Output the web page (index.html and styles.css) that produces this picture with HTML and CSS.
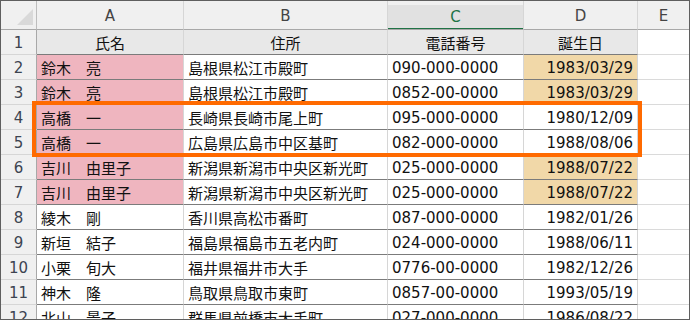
FILE: index.html
```html
<!DOCTYPE html>
<html lang="ja">
<head>
<meta charset="utf-8">
<title>Sheet</title>
<link rel="stylesheet" href="styles.css">
</head>
<body>
<div class="frame">
  <div class="sheet">
    <div class="corner"><svg class="tri" width="16" height="16" viewBox="0 0 16 16"><polygon points="16,0 16,16 0,16" fill="#d9d9d9"/></svg></div>
    <div class="ch">A</div><div class="ch">B</div><div class="ch sel"><span class="selbg">C</span></div><div class="ch">D</div><div class="ch last">E</div>

    <div class="rh">1</div><div class="c hd">氏名</div><div class="c hd">住所</div><div class="c hd">電話番号</div><div class="c hd">誕生日</div><div class="e"></div>

    <div class="rh">2</div><div class="c pk">鈴木　亮</div><div class="c">島根県松江市殿町</div><div class="c">090-000-0000</div><div class="c tn r">1983/03/29</div><div class="e"></div>
    <div class="rh">3</div><div class="c pk">鈴木　亮</div><div class="c">島根県松江市殿町</div><div class="c">0852-00-0000</div><div class="c tn r">1983/03/29</div><div class="e"></div>
    <div class="rh">4</div><div class="c pk">高橋　一</div><div class="c">長崎県長崎市尾上町</div><div class="c">095-000-0000</div><div class="c r">1980/12/09</div><div class="e"></div>
    <div class="rh">5</div><div class="c pk">高橋　一</div><div class="c">広島県広島市中区基町</div><div class="c">082-000-0000</div><div class="c r">1988/08/06</div><div class="e"></div>
    <div class="rh">6</div><div class="c pk">吉川　由里子</div><div class="c">新潟県新潟市中央区新光町</div><div class="c">025-000-0000</div><div class="c tn r">1988/07/22</div><div class="e"></div>
    <div class="rh">7</div><div class="c pk">吉川　由里子</div><div class="c">新潟県新潟市中央区新光町</div><div class="c">025-000-0000</div><div class="c tn r">1988/07/22</div><div class="e"></div>
    <div class="rh">8</div><div class="c">綾木　剛</div><div class="c">香川県高松市番町</div><div class="c">087-000-0000</div><div class="c r">1982/01/26</div><div class="e"></div>
    <div class="rh">9</div><div class="c">新垣　結子</div><div class="c">福島県福島市五老内町</div><div class="c">024-000-0000</div><div class="c r">1988/06/11</div><div class="e"></div>
    <div class="rh">10</div><div class="c">小栗　旬大</div><div class="c">福井県福井市大手</div><div class="c">0776-00-0000</div><div class="c r">1982/12/26</div><div class="e"></div>
    <div class="rh">11</div><div class="c">神木　隆</div><div class="c">鳥取県鳥取市東町</div><div class="c">0857-00-0000</div><div class="c r">1993/05/19</div><div class="e"></div>
    <div class="rh">12</div><div class="c">北山　景子</div><div class="c">群馬県前橋市大手町</div><div class="c">027-000-0000</div><div class="c r">1986/08/22</div><div class="e"></div>
  </div>
  <div class="mark"></div>
</div>
</body>
</html>
```
FILE: styles.css
```css
* { box-sizing: border-box; }
html, body { margin: 0; padding: 0; background: #fff; }
.frame {
  position: relative;
  width: 690px;
  height: 320px;
  border: 1px solid #5f5f5f;
  overflow: hidden;
  font-family: "DejaVu Sans", "Noto Sans CJK JP", sans-serif;
  font-size: 15px;
  color: #111;
}
.sheet {
  display: grid;
  grid-template-columns: 36px 147px 204px 136px 114px 51px;
  grid-template-rows: 29px repeat(11, 25px) 25px;
}
.sheet > div {
  display: flex;
  align-items: center;
  white-space: nowrap;
  overflow: hidden;
}
.corner {
  background: #f0f0f0;
  border-right: 1px solid #bdbdbd;
  border-bottom: 1px solid #a8a8a8;
  justify-content: flex-end;
  align-items: flex-end !important;
  padding: 0 3px 4px 0;
}
.tri { display: block; }
.ch {
  background: #f0f0f0;
  border-right: 1px solid #d6d6d6;
  border-bottom: 1px solid #a8a8a8;
  justify-content: center;
  color: #444;
  padding-top: 2px;
}
.ch.last { border-right: none; }
.ch.sel {
  padding: 4px 0 0 0;
  align-items: stretch !important;
}
.selbg {
  flex: 1;
  display: flex;
  align-items: center;
  justify-content: center;
  background: #e1e1e1;
  border-bottom: 2px solid #217346;
  color: #217346;
  margin-bottom: -1px;
}
.rh {
  background: #f0f0f0;
  border-right: 1px solid #a8a8a8;
  border-bottom: 1px solid #d6d6d6;
  justify-content: center;
  color: #3d4450;
  padding-top: 1px;
}
.c {
  border-right: 1px solid #d6d6d6;
  border-bottom: 1px solid #7b7b7b;
  padding: 1px 4px 0 4px;
  background: #fff;
}
.hd { background: #e8e8e8; justify-content: center; }
.pk { background: #efb5bf; }
.tn { background: #f1d8a8; }
.r { justify-content: flex-end; }
.e {
  border-bottom: 1px solid #dadada;
  background: #fff;
}
.mark {
  position: absolute;
  left: 31px;
  top: 100px;
  width: 610px;
  height: 56px;
  border: 4px solid #ff6a00;
}
```
